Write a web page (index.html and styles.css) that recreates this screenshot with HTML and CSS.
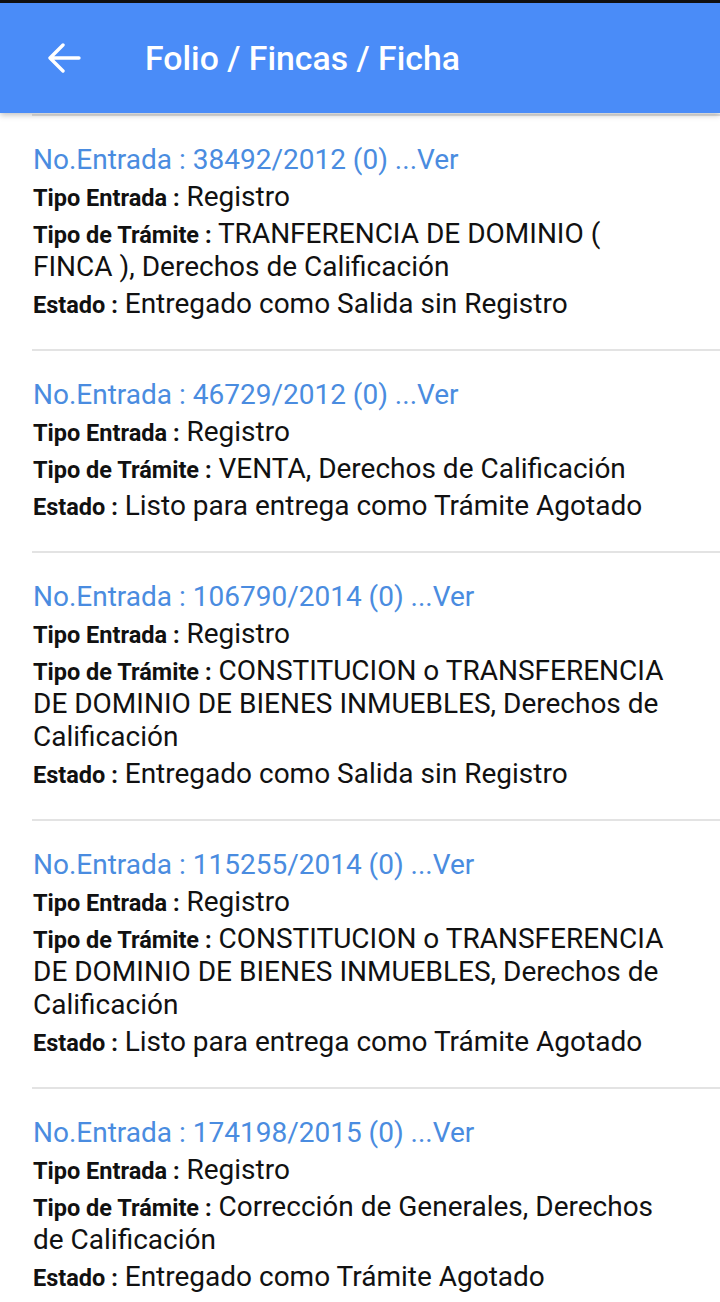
FILE: index.html
```html
<!DOCTYPE html>
<html lang="es">
<head>
<meta charset="utf-8">
<title>Folio / Fincas / Ficha</title>
<link rel="stylesheet" href="styles.css">
</head>
<body>
<div class="statusbar"></div>
<header class="appbar">
  <button class="back" aria-label="Atrás">
    <svg width="34" height="30" viewBox="0 0 34 30"><path d="M32 15H4M16 2L3 15l13 13" fill="none" stroke="#fff" stroke-width="3.4" stroke-linecap="round" stroke-linejoin="round"/></svg>
  </button>
  <h1 class="title">Folio / Fincas / Ficha</h1>
</header>
<main class="list">
  <section class="item">
    <div class="link">No.Entrada : 38492/2012 (0) ...Ver</div>
    <div class="field"><b>Tipo Entrada :</b> Registro</div>
    <div class="field"><b>Tipo de Trámite :</b> TRANFERENCIA DE DOMINIO ( FINCA ), Derechos de Calificación</div>
    <div class="field"><b>Estado :</b> Entregado como Salida sin Registro</div>
  </section>
  <section class="item">
    <div class="link">No.Entrada : 46729/2012 (0) ...Ver</div>
    <div class="field"><b>Tipo Entrada :</b> Registro</div>
    <div class="field"><b>Tipo de Trámite :</b> VENTA, Derechos de Calificación</div>
    <div class="field"><b>Estado :</b> Listo para entrega como Trámite Agotado</div>
  </section>
  <section class="item">
    <div class="link">No.Entrada : 106790/2014 (0) ...Ver</div>
    <div class="field"><b>Tipo Entrada :</b> Registro</div>
    <div class="field"><b>Tipo de Trámite :</b> CONSTITUCION o TRANSFERENCIA DE DOMINIO DE BIENES INMUEBLES, Derechos de Calificación</div>
    <div class="field"><b>Estado :</b> Entregado como Salida sin Registro</div>
  </section>
  <section class="item">
    <div class="link">No.Entrada : 115255/2014 (0) ...Ver</div>
    <div class="field"><b>Tipo Entrada :</b> Registro</div>
    <div class="field"><b>Tipo de Trámite :</b> CONSTITUCION o TRANSFERENCIA DE DOMINIO DE BIENES INMUEBLES, Derechos de Calificación</div>
    <div class="field"><b>Estado :</b> Listo para entrega como Trámite Agotado</div>
  </section>
  <section class="item">
    <div class="link">No.Entrada : 174198/2015 (0) ...Ver</div>
    <div class="field"><b>Tipo Entrada :</b> Registro</div>
    <div class="field"><b>Tipo de Trámite :</b> Corrección de Generales, Derechos de Calificación</div>
    <div class="field"><b>Estado :</b> Entregado como Trámite Agotado</div>
  </section>
</main>
</body>
</html>
```

FILE: styles.css
```css
html, body {
  margin: 0;
  padding: 0;
  background: #ffffff;
}
body {
  font-family: Roboto, "Noto Sans", sans-serif;
  color: #111111;
  overflow: hidden;
  height: 1302px;
}
.statusbar {
  height: 3px;
  background: #111111;
}
.appbar {
  height: 110px;
  background: #4a8cf8;
  display: flex;
  align-items: center;
  position: relative;
  z-index: 2;
  box-shadow: 0 2px 6px rgba(0, 0, 0, 0.25);
}
.back {
  background: none;
  border: 0;
  padding: 0;
  margin: 0 0 0 47px;
  width: 34px;
  height: 30px;
  display: flex;
  align-items: center;
  justify-content: center;
}
.title {
  margin: 0 0 0 64px;
  font-size: 33.8px;
  font-weight: 500;
  color: #ffffff;
}
.list {
  padding-top: 1px;
}
.item {
  margin-left: 32px;
  padding: 27px 40px 29px 1px;
  border-top: 2px solid #e3e3e3;
  display: flex;
  flex-direction: column;
  gap: 4px;
}
.link {
  font-size: 28px;
  line-height: 33px;
  color: #4a8ce0;
}
.field {
  font-size: 28px;
  line-height: 33px;
  color: #111111;
}
.field b {
  font-size: 23.5px;
  line-height: 1;
  font-weight: 700;
}
```
